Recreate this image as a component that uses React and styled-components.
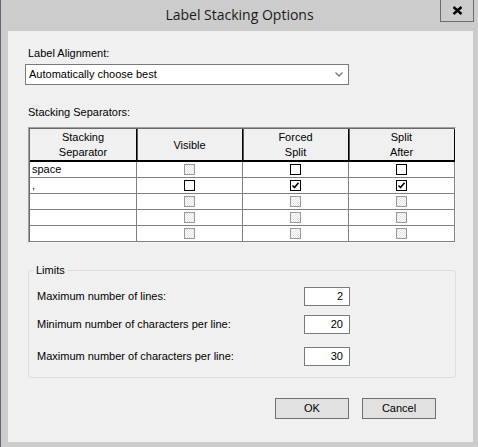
import React from "react";
import styled, { createGlobalStyle } from "styled-components";

const Global = createGlobalStyle`
  html, body { margin: 0; padding: 0; background: #cccccc; }
  body { font-family: "Liberation Sans", Arial, sans-serif; font-size: 11px; color: #000; }
  * { box-sizing: border-box; }
`;

const Window = styled.div`
  width: 478px;
  height: 447px;
  background: #cccccc;
  border-left: 1px solid #5f6975;
  display: flex;
  flex-direction: column;
`;

const TitleBar = styled.div`
  height: 31px;
  flex: none;
  display: grid;
  grid-template-columns: 1fr auto 1fr;
  align-items: start;
`;

const Title = styled.div`
  grid-column: 2;
  font-family: "Open Sans", "Liberation Sans", sans-serif;
  font-size: 14px;
  line-height: 30px;
  color: #1a1a1a;
`;

const CloseButton = styled.div`
  grid-column: 3;
  justify-self: end;
  width: 34px;
  height: 22px;
  margin-right: 4px;
  border: 1px solid #6d6d6d;
  border-top: none;
  background: #cccccc;
  display: flex;
  align-items: center;
  justify-content: center;
`;

const Client = styled.div`
  flex: 1;
  margin: 0 5px 5px 7px;
  background: #f0f0f0;
  padding: 16px 17px 0 20px;
  display: flex;
  flex-direction: column;
`;

const Label = styled.div`
  line-height: 13px;
  margin-top: ${(p) => p.$mt || 0}px;
`;

const Select = styled.div`
  margin: 4px 0 0 -3px;
  width: 324px;
  height: 21px;
  border: 1px solid #7a7a7a;
  background: #fff;
  display: flex;
  align-items: center;
  justify-content: space-between;
  padding: 0 5px 0 3px;
  line-height: 13px;
`;

const TableFrame = styled.div`
  margin-top: 8px;
  width: 428px;
  border: 1px solid;
  border-color: #a0a0a0 #f6f6f6 #f6f6f6 #a0a0a0;
`;

const TableGrid = styled.div`
  display: grid;
  grid-template-columns: 107px 106px 106px 106px;
  border-left: 1px solid #696969;
  border-top: 1px solid #696969;
`;

const HeadCell = styled.div`
  height: 33px;
  background: #f0f0f0;
  border-right: 1px solid #000;
  border-bottom: 2px solid #000;
  box-shadow: ${(p) => (p.$first ? "none" : "inset 1px 0 0 #5a5a5a")};
  display: flex;
  align-items: center;
  justify-content: center;
  text-align: center;
  line-height: 15px;
  padding-top: 1px;
`;

const Cell = styled.div`
  height: 16px;
  background: #fff;
  border-right: 1px solid #808080;
  border-bottom: 1px solid #808080;
  display: flex;
  align-items: center;
  justify-content: ${(p) => (p.$text ? "flex-start" : "center")};
  padding-left: ${(p) => (p.$text ? 2 : 0)}px;
  line-height: 13px;
`;

const Box = styled.div`
  width: 11px;
  height: 11px;
  border: 1px solid ${(p) => (p.$disabled ? "#9a9a9a" : "#000")};
  background: ${(p) =>
    p.$disabled
      ? "repeating-conic-gradient(#ffffff 0 25%, #e2e2e2 0 50%) 0 0 / 2px 2px"
      : "#fff"};
  display: flex;
  align-items: center;
  justify-content: center;
`;

const Fieldset = styled.fieldset`
  margin: 21px 0 0 0;
  width: 428px;
  padding: 10px 8px 11px 8px;
  border: 1px solid #dcdcdc;
  border-radius: 3px;
  min-width: 0;
`;

const Legend = styled.legend`
  padding: 0 2px;
  margin-left: -3px;
  line-height: 13px;
  font-size: 11px;
`;

const Row = styled.div`
  display: flex;
  align-items: center;
  margin-top: ${(p) => p.$mt || 0}px;
`;

const RowLabel = styled.div`
  width: 267px;
  line-height: 13px;
`;

const NumInput = styled.div`
  width: 46px;
  height: 19px;
  border: 1px solid #7a7a7a;
  background: #fff;
  text-align: right;
  padding-right: 6px;
  line-height: 17px;
`;

const ButtonRow = styled.div`
  margin-top: 20px;
  margin-right: 20px;
  display: flex;
  justify-content: flex-end;
  gap: 13px;
`;

const Button = styled.div`
  width: 74px;
  height: 21px;
  background: #e1e1e1;
  border: 1px solid #707070;
  display: flex;
  align-items: center;
  justify-content: center;
  line-height: 13px;
`;

const Check = ({ state }) => (
  <Box $disabled={state === "d"}>
    {state === "c" && (
      <svg width="9" height="9" viewBox="0 0 9 9">
        <path d="M1.5 4.5 L3.5 6.5 L7.5 1.8" fill="none" stroke="#000" strokeWidth="1.6" />
      </svg>
    )}
  </Box>
);

const rows = [
  { name: "space", v: "d", f: "u", s: "u" },
  { name: ",", v: "u", f: "c", s: "c" },
  { name: "", v: "d", f: "d", s: "d" },
  { name: "", v: "d", f: "d", s: "d" },
  { name: "", v: "d", f: "d", s: "d" },
];

export default function App() {
  return (
    <>
      <Global />
      <Window>
        <TitleBar>
          <Title>Label Stacking Options</Title>
          <CloseButton>
            <svg width="11" height="9" viewBox="0 0 11 9">
              <path d="M1.5 1 L9.5 8 M9.5 1 L1.5 8" stroke="#000" strokeWidth="2.4" />
            </svg>
          </CloseButton>
        </TitleBar>
        <Client>
          <Label>Label Alignment:</Label>
          <Select>
            <span>Automatically choose best</span>
            <svg width="8" height="5" viewBox="0 0 8 5">
              <path d="M0.5 0.5 L4 4 L7.5 0.5" fill="none" stroke="#7a7a7a" strokeWidth="1.3" />
            </svg>
          </Select>
          <Label $mt={21}>Stacking Separators:</Label>
          <TableFrame>
            <TableGrid>
              <HeadCell $first>Stacking<br />Separator</HeadCell>
              <HeadCell>Visible</HeadCell>
              <HeadCell>Forced<br />Split</HeadCell>
              <HeadCell>Split<br />After</HeadCell>
              {rows.map((r, i) => (
                <React.Fragment key={i}>
                  <Cell $text>{r.name}</Cell>
                  <Cell><Check state={r.v} /></Cell>
                  <Cell><Check state={r.f} /></Cell>
                  <Cell><Check state={r.s} /></Cell>
                </React.Fragment>
              ))}
            </TableGrid>
          </TableFrame>
          <Fieldset>
            <Legend>Limits</Legend>
            <Row>
              <RowLabel>Maximum number of lines:</RowLabel>
              <NumInput>2</NumInput>
            </Row>
            <Row $mt={9}>
              <RowLabel>Minimum number of characters per line:</RowLabel>
              <NumInput>20</NumInput>
            </Row>
            <Row $mt={13}>
              <RowLabel>Maximum number of characters per line:</RowLabel>
              <NumInput>30</NumInput>
            </Row>
          </Fieldset>
          <ButtonRow>
            <Button>OK</Button>
            <Button>Cancel</Button>
          </ButtonRow>
        </Client>
      </Window>
    </>
  );
}
